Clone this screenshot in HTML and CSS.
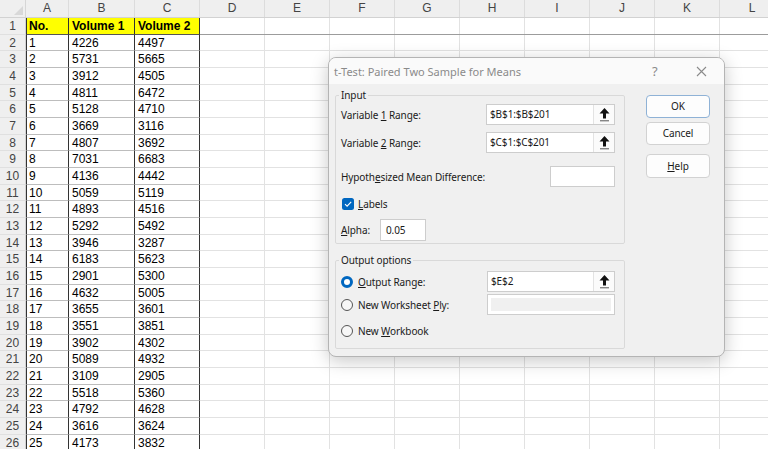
FILE: index.html
```html
<!doctype html>
<html>
<head>
  <link rel="stylesheet" href="styles.css">
</head>
<body>
<div class="sheet">
  <div class="colhead">
    <div class="corner"><span class="corner-tri"></span></div>
    <div class="ch col-a">A</div>
    <div class="ch col-b">B</div>
    <div class="ch col-c">C</div>
    <div class="ch">D</div>
    <div class="ch">E</div>
    <div class="ch">F</div>
    <div class="ch">G</div>
    <div class="ch">H</div>
    <div class="ch">I</div>
    <div class="ch">J</div>
    <div class="ch">K</div>
    <div class="ch">L</div>
  </div>
  <div class="row row-head"><div class="rh">1</div><div class="c col-a">No.</div><div class="c col-b">Volume 1</div><div class="c col-c">Volume 2</div><div class="rest"></div></div>
  <div class="row"><div class="rh">2</div><div class="c col-a">1</div><div class="c col-b">4226</div><div class="c col-c">4497</div><div class="rest"></div></div>
  <div class="row"><div class="rh">3</div><div class="c col-a">2</div><div class="c col-b">5731</div><div class="c col-c">5665</div><div class="rest"></div></div>
  <div class="row"><div class="rh">4</div><div class="c col-a">3</div><div class="c col-b">3912</div><div class="c col-c">4505</div><div class="rest"></div></div>
  <div class="row"><div class="rh">5</div><div class="c col-a">4</div><div class="c col-b">4811</div><div class="c col-c">6472</div><div class="rest"></div></div>
  <div class="row"><div class="rh">6</div><div class="c col-a">5</div><div class="c col-b">5128</div><div class="c col-c">4710</div><div class="rest"></div></div>
  <div class="row"><div class="rh">7</div><div class="c col-a">6</div><div class="c col-b">3669</div><div class="c col-c">3116</div><div class="rest"></div></div>
  <div class="row"><div class="rh">8</div><div class="c col-a">7</div><div class="c col-b">4807</div><div class="c col-c">3692</div><div class="rest"></div></div>
  <div class="row"><div class="rh">9</div><div class="c col-a">8</div><div class="c col-b">7031</div><div class="c col-c">6683</div><div class="rest"></div></div>
  <div class="row"><div class="rh">10</div><div class="c col-a">9</div><div class="c col-b">4136</div><div class="c col-c">4442</div><div class="rest"></div></div>
  <div class="row"><div class="rh">11</div><div class="c col-a">10</div><div class="c col-b">5059</div><div class="c col-c">5119</div><div class="rest"></div></div>
  <div class="row"><div class="rh">12</div><div class="c col-a">11</div><div class="c col-b">4893</div><div class="c col-c">4516</div><div class="rest"></div></div>
  <div class="row"><div class="rh">13</div><div class="c col-a">12</div><div class="c col-b">5292</div><div class="c col-c">5492</div><div class="rest"></div></div>
  <div class="row"><div class="rh">14</div><div class="c col-a">13</div><div class="c col-b">3946</div><div class="c col-c">3287</div><div class="rest"></div></div>
  <div class="row"><div class="rh">15</div><div class="c col-a">14</div><div class="c col-b">6183</div><div class="c col-c">5623</div><div class="rest"></div></div>
  <div class="row"><div class="rh">16</div><div class="c col-a">15</div><div class="c col-b">2901</div><div class="c col-c">5300</div><div class="rest"></div></div>
  <div class="row"><div class="rh">17</div><div class="c col-a">16</div><div class="c col-b">4632</div><div class="c col-c">5005</div><div class="rest"></div></div>
  <div class="row"><div class="rh">18</div><div class="c col-a">17</div><div class="c col-b">3655</div><div class="c col-c">3601</div><div class="rest"></div></div>
  <div class="row"><div class="rh">19</div><div class="c col-a">18</div><div class="c col-b">3551</div><div class="c col-c">3851</div><div class="rest"></div></div>
  <div class="row"><div class="rh">20</div><div class="c col-a">19</div><div class="c col-b">3902</div><div class="c col-c">4302</div><div class="rest"></div></div>
  <div class="row"><div class="rh">21</div><div class="c col-a">20</div><div class="c col-b">5089</div><div class="c col-c">4932</div><div class="rest"></div></div>
  <div class="row"><div class="rh">22</div><div class="c col-a">21</div><div class="c col-b">3109</div><div class="c col-c">2905</div><div class="rest"></div></div>
  <div class="row"><div class="rh">23</div><div class="c col-a">22</div><div class="c col-b">5518</div><div class="c col-c">5360</div><div class="rest"></div></div>
  <div class="row"><div class="rh">24</div><div class="c col-a">23</div><div class="c col-b">4792</div><div class="c col-c">4628</div><div class="rest"></div></div>
  <div class="row"><div class="rh">25</div><div class="c col-a">24</div><div class="c col-b">3616</div><div class="c col-c">3624</div><div class="rest"></div></div>
  <div class="row"><div class="rh">26</div><div class="c col-a">25</div><div class="c col-b">4173</div><div class="c col-c">3832</div><div class="rest"></div></div>
</div>

<div class="dialog">
  <div class="titlebar">
    <span class="title">t-Test: Paired Two Sample for Means</span>
    <span class="help-q">?</span>
    <svg class="close" width="11" height="11" viewBox="0 0 11 11"><path d="M1 1 L10 10 M10 1 L1 10" stroke="#8a8a8a" stroke-width="1.1" fill="none"/></svg>
  </div>
  <div class="dlg-body">
    <div class="groups">
      <fieldset class="group group-input">
        <legend>Input</legend>
        <div class="frow frow-first">
          <span>Variable <u>1</u> Range:</span>
          <div class="range"><span class="range-val">$B$1:$B$201</span><span class="pick"><svg width="11" height="14" viewBox="0 0 11 14"><polygon points="5.5,0 10.5,5.5 7,5.5 7,10.5 4,10.5 4,5.5 0.5,5.5" fill="#111"/><line x1="1" y1="12.8" x2="10" y2="12.8" stroke="#555" stroke-width="1"/></svg></span></div>
        </div>
        <div class="frow">
          <span>Variable <u>2</u> Range:</span>
          <div class="range"><span class="range-val">$C$1:$C$201</span><span class="pick"><svg width="11" height="14" viewBox="0 0 11 14"><polygon points="5.5,0 10.5,5.5 7,5.5 7,10.5 4,10.5 4,5.5 0.5,5.5" fill="#111"/><line x1="1" y1="12.8" x2="10" y2="12.8" stroke="#555" stroke-width="1"/></svg></span></div>
        </div>
        <div class="frow frow-hyp">
          <span>Hypoth<u>e</u>sized Mean Difference:</span>
          <div class="box box-hyp"></div>
        </div>
        <div class="frow frow-check">
          <span class="check"><svg width="12" height="12" viewBox="0 0 12 12"><rect x="0" y="0" width="12" height="12" rx="2.5" fill="#0067c0"/><path d="M3 6.2 L5.1 8.2 L9.2 3.9" stroke="#fff" stroke-width="1.1" fill="none"/></svg></span>
          <span><u>L</u>abels</span>
        </div>
        <div class="frow frow-alpha">
          <span class="alpha-label"><u>A</u>lpha:</span>
          <div class="box box-alpha">0.05</div>
        </div>
      </fieldset>

      <fieldset class="group group-output">
        <legend>Output options</legend>
        <div class="frow frow-first">
          <span class="opt"><span class="radio radio-on"></span><span><u>O</u>utput Range:</span></span>
          <div class="range range-out"><span class="range-val">$E$2</span><span class="pick"><svg width="11" height="14" viewBox="0 0 11 14"><polygon points="5.5,0 10.5,5.5 7,5.5 7,10.5 4,10.5 4,5.5 0.5,5.5" fill="#111"/><line x1="1" y1="12.8" x2="10" y2="12.8" stroke="#555" stroke-width="1"/></svg></span></div>
        </div>
        <div class="frow frow-out2">
          <span class="opt"><span class="radio"></span><span>New Worksheet <u>P</u>ly:</span></span>
          <div class="box box-ply"><span class="ply-inner"></span></div>
        </div>
        <div class="frow frow-out3">
          <span class="opt"><span class="radio"></span><span>New <u>W</u>orkbook</span></span>
        </div>
      </fieldset>
    </div>

    <div class="buttons">
      <div class="btn btn-default">OK</div>
      <div class="btn">Cancel</div>
      <div class="btn btn-help"><u>H</u>elp</div>
    </div>
  </div>
</div>
</body>
</html>
```

FILE: styles.css
```css
body {
  margin: 0;
  width: 768px;
  height: 449px;
  overflow: hidden;
  background: #fff;
  position: relative;
  font-family: "Liberation Sans", Arial, sans-serif;
}

/* sheet */
.sheet {
  display: flex;
  flex-direction: column;
  font-size: 12px;
  color: #000;
}
.colhead {
  display: flex;
  height: 18px;
  box-sizing: border-box;
  background: #efefef;
  border-bottom: 1px solid #d2d2d2;
  color: #444;
}
.corner {
  width: 26px;
  flex: none;
  box-sizing: border-box;
  border-right: 1px solid #d6d6d6;
  position: relative;
}
.corner-tri {
  position: absolute;
  right: 2px;
  bottom: 2px;
  width: 0;
  height: 0;
  border-left: 9px solid transparent;
  border-bottom: 9px solid #d8d8d8;
}
.ch {
  width: 65px;
  flex: none;
  box-sizing: border-box;
  border-right: 1px solid #dcdcdc;
  text-align: center;
  line-height: 17px;
}
.col-a { width: 43px; }
.col-b { width: 66px; }
.col-c { width: 65px; }

.row {
  display: flex;
  height: 16.68px;
  line-height: 16px;
}
.rh {
  width: 26px;
  flex: none;
  box-sizing: border-box;
  background: #efefef;
  border-right: 1px solid #d2d2d2;
  border-bottom: 1px solid #e0e0e0;
  color: #444;
  text-align: center;
}
.c {
  flex: none;
  box-sizing: border-box;
  padding-left: 3px;
  border-right: 1px solid #333;
  border-bottom: 1px solid #bdbdbd;
  white-space: nowrap;
}
.row .col-a { border-left: 1px solid #333; padding-left: 2px; }
.row-head .c {
  background: #ffff00;
  font-weight: bold;
  border-bottom-color: #555;
}
.rest {
  flex: 1;
  border-bottom: 1px solid #e2e2e2;
  background-image: linear-gradient(to right, transparent 64px, #e2e2e2 64px);
  background-size: 65px 100%;
}
.row-head .rest {
  border-bottom: 1px solid #9c9c9c;
}

/* dialog */
.dialog {
  position: absolute;
  left: 328px;
  top: 57px;
  width: 397px;
  height: 300px;
  box-sizing: border-box;
  border: 1px solid #b4b4b4;
  border-radius: 8px;
  background: #f0f0f0;
  box-shadow: 0 4px 18px rgba(0, 0, 0, 0.22);
  overflow: hidden;
  font-family: "Noto Sans", "Open Sans", sans-serif;
  font-size: 10px;
  letter-spacing: -0.1px;
  color: #1a1a1a;
}
.titlebar {
  height: 26px;
  display: flex;
  align-items: center;
  padding-left: 5px;
  background: #fafafa;
  color: #8a8a8a;
  font-size: 11px;
  letter-spacing: 0;
}
.title { flex: 1; }
.help-q {
  font-size: 13px;
  width: 14px;
  margin-right: 30px;
  color: #8a8a8a;
}
.close { margin-right: 17px; }

.dlg-body {
  display: flex;
  padding: 0 14px 0 6px;
}
.groups {
  width: 290px;
  flex: none;
}
.group {
  margin: 4px 0 0;
  padding: 2px 9px 2px 5px;
  border: 1px solid #d9d9d9;
  border-radius: 2px;
  min-width: 0;
}
.group legend {
  padding: 0 2px;
  margin-left: -2px;
  line-height: 14px;
}
.group-output {
  margin-top: 9px;
  padding: 4px 9px 7px 5px;
}

.frow {
  display: flex;
  align-items: center;
  justify-content: space-between;
  height: 21px;
  margin-top: 7px;
}
.frow-first { margin-top: 0; }
.frow-hyp { margin-top: 13px; }
.frow-check {
  justify-content: flex-start;
  margin-top: 6px;
  gap: 4px;
}
.check { display: flex; margin-left: 1px; }
.frow-alpha {
  justify-content: flex-start;
  height: 22px;
  margin-top: 5px;
}
.alpha-label { width: 39px; }

.range {
  display: flex;
  width: 129px;
  height: 21px;
  box-sizing: border-box;
  border: 1px solid #cdcdcd;
  background: #fff;
}
.range-out { width: 128px; }
.range-val {
  flex: 1;
  padding-left: 3px;
  line-height: 19px;
}
.pick {
  width: 21px;
  box-sizing: border-box;
  border-left: 1px solid #e3e3e3;
  background: #fbfbfb;
  display: flex;
  align-items: center;
  justify-content: center;
}
.box {
  box-sizing: border-box;
  border: 1px solid #cdcdcd;
  background: #fff;
  height: 21px;
}
.box-hyp { width: 65px; }
.box-alpha {
  width: 46px;
  height: 22px;
  padding-left: 5px;
  line-height: 20px;
}
.box-ply {
  width: 128px;
  padding: 3px;
}
.ply-inner {
  display: block;
  height: 100%;
  background: #f0f0f0;
}

.opt {
  display: flex;
  align-items: center;
  gap: 5px;
}
.radio {
  width: 12px;
  height: 12px;
  box-sizing: border-box;
  border: 1px solid #555;
  border-radius: 50%;
  background: #f7f7f7;
}
.radio-on {
  border: 3.5px solid #0067c0;
  background: #fff;
}
.frow-out2 { margin-top: 2px; }
.frow-out3 { margin-top: 5px; }

.buttons {
  margin-left: 21px;
  width: 64px;
  flex: none;
  padding-top: 11px;
}
.btn {
  height: 23px;
  box-sizing: border-box;
  border: 1px solid #d2d2d2;
  border-radius: 4px;
  background: #fdfdfd;
  text-align: center;
  line-height: 21px;
  margin-bottom: 4px;
}
.btn-default {
  border-color: #8fb2d6;
}
.btn-help {
  margin-top: 9px;
  height: 24px;
  line-height: 22px;
}
```
